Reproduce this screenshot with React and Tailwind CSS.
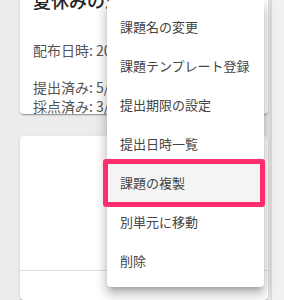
import React from "react";

const items = [
  "課題名の変更",
  "課題テンプレート登録",
  "提出期限の設定",
  "提出日時一覧",
  "課題の複製",
  "別単元に移動",
  "削除",
];

export default function App() {
  return (
    <div
      className="relative w-[284px] h-[300px] overflow-hidden bg-[#ececec] flex"
      style={{ fontFamily: '"Noto Sans CJK JP", Roboto, sans-serif' }}
    >
      <div className="w-[270px] pl-[20px] pr-[2px] flex flex-col gap-[22px] mt-[-30px]">
        <div className="w-[248px] bg-white rounded-[4px] shadow-[0_2px_1px_-1px_rgba(0,0,0,0.2),0_1px_1px_0_rgba(0,0,0,0.14),0_1px_3px_0_rgba(0,0,0,0.12)] pl-[13px] pt-[18px] pb-[21px] whitespace-nowrap overflow-hidden">
          <div className="text-[18px] leading-[24px] font-medium text-[#222]">夏休みの思い出</div>
          <div className="mt-[28px] text-[14px] leading-[20px] text-[#555]">配布日時: 2021/07/20 09:00</div>
          <div className="mt-[18px] text-[14px] leading-[19px] text-[#555]">提出済み: 5/10</div>
          <div className="text-[14px] leading-[19px] text-[#555]">採点済み: 3/10</div>
        </div>
        <div className="w-[248px] h-[200px] bg-white rounded-[4px] shadow-[0_2px_1px_-1px_rgba(0,0,0,0.2),0_1px_1px_0_rgba(0,0,0,0.14),0_1px_3px_0_rgba(0,0,0,0.12)] flex flex-col">
          <div className="h-[134px]" />
          <div className="border-t border-[#e0e0e0]" />
        </div>
      </div>
      <div className="w-[14px] h-full border-l-2 border-[#dcdcdc] bg-[#f1f1f1]" />

      <div className="absolute left-[107px] top-0 w-[157px] py-[7px] bg-white rounded-[4px] shadow-[0_5px_5px_-3px_rgba(0,0,0,0.2),0_8px_10px_1px_rgba(0,0,0,0.14),0_3px_14px_2px_rgba(0,0,0,0.12)]">
        {items.map((t, i) => (
          <div
            key={t}
            className={`h-[39px] flex items-center pl-[13px] text-[13px] text-[#444] whitespace-nowrap ${i === 4 ? "bg-[#f4f4f4]" : ""}`}
          >
            {t}
          </div>
        ))}
      </div>
      <div className="absolute left-[103px] top-[159px] w-[162px] h-[48px] border-[5px] border-[#fe2d6e] rounded-[3px]" />
    </div>
  );
}
